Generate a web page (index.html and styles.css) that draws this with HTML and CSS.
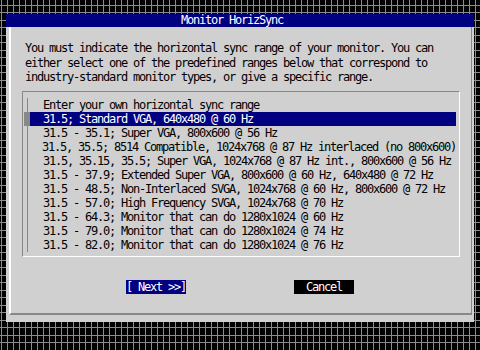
FILE: index.html
```html
<!DOCTYPE html>
<html lang="en">
<head>
    <meta charset="UTF-8">
    <title>Monitor HorizSync</title>
    <link rel="stylesheet" href="styles.css">
</head>
<body>
    <div class="dialog">
        <div class="titlebar">Monitor HorizSync</div>
        <div class="frame">
            <p class="intro">You must indicate the horizontal sync range of your monitor. You can<br>either select one of the predefined ranges below that correspond to<br>industry-standard monitor types, or give a specific range.</p>

            <!-- list of sync ranges -->
            <div class="list">
                <div class="row"><span class="mark"></span><span class="label">Enter your own horizontal sync range</span></div>
                <div class="row selected"><span class="mark"></span><span class="label">31.5; Standard VGA, 640x480 @ 60 Hz</span></div>
                <div class="row"><span class="mark"></span><span class="label">31.5 - 35.1; Super VGA, 800x600 @ 56 Hz</span></div>
                <div class="row"><span class="mark"></span><span class="label">31.5, 35.5; 8514 Compatible, 1024x768 @ 87 Hz interlaced (no 800x600)</span></div>
                <div class="row"><span class="mark"></span><span class="label">31.5, 35.15, 35.5; Super VGA, 1024x768 @ 87 Hz int., 800x600 @ 56 Hz</span></div>
                <div class="row"><span class="mark"></span><span class="label">31.5 - 37.9; Extended Super VGA, 800x600 @ 60 Hz, 640x480 @ 72 Hz</span></div>
                <div class="row"><span class="mark"></span><span class="label">31.5 - 48.5; Non-Interlaced SVGA, 1024x768 @ 60 Hz, 800x600 @ 72 Hz</span></div>
                <div class="row"><span class="mark"></span><span class="label">31.5 - 57.0; High Frequency SVGA, 1024x768 @ 70 Hz</span></div>
                <div class="row"><span class="mark"></span><span class="label">31.5 - 64.3; Monitor that can do 1280x1024 @ 60 Hz</span></div>
                <div class="row"><span class="mark"></span><span class="label">31.5 - 79.0; Monitor that can do 1280x1024 @ 74 Hz</span></div>
                <div class="row"><span class="mark"></span><span class="label">31.5 - 82.0; Monitor that can do 1280x1024 @ 76 Hz</span></div>
            </div>

            <div class="buttons">
                <div class="btn btn-next">[ Next &gt;&gt;]</div>
                <div class="btn btn-cancel">Cancel</div>
            </div>
        </div>
    </div>
</body>
</html>
```

FILE: styles.css
```css
body {
    margin: 0;
    padding: 14px 0 0 6px;
    width: 480px;
    height: 350px;
    box-sizing: border-box;
    overflow: hidden;
    background-color: #000;
    background-image:
        linear-gradient(to right, #8c8c8c 1px, transparent 1px),
        linear-gradient(to bottom, #8c8c8c 1px, transparent 1px 7px, #8c8c8c 7px 8px, transparent 8px);
    background-size: 6px 100%, 100% 15px;
    background-position: 1px 0, 0 5px;
    font-family: "DejaVu Sans Mono", monospace;
    font-size: 12px;
    letter-spacing: -1.225px;
}
.dialog {
    width: 468px;
    height: 308px;
    background: #d0d0d0;
    display: flex;
    flex-direction: column;
}
.titlebar {
    height: 13px;
    line-height: 13px;
    background: #000080;
    color: #fff;
    padding-left: 175px;
    white-space: pre;
}
.frame {
    flex: 1;
    margin: 0 2px 7px 3px;
    border-left: 2px solid #fff;
    border-right: 1px solid #888;
    border-bottom: 2px solid #888;
}
.intro {
    margin: 14px 0 0 14px;
    line-height: 14.5px;
    white-space: nowrap;
}
.list {
    margin: 6.5px 0 0 11px;
    width: 438px;
    height: 166px;
    box-sizing: border-box;
    border: 1px solid;
    border-color: #888 #fff #fff #888;
    padding: 6px 3px 0 1px;
}
.row {
    display: flex;
    height: 14px;
    line-height: 14px;
}
.mark {
    width: 6px;
    background: linear-gradient(to right, transparent 3px, #888 3px 4px, transparent 4px);
}
.row.selected .mark {
    background: #888;
}
.label {
    flex: 1;
    padding-left: 13px;
    white-space: nowrap;
}
.row.selected .label {
    background: #000080;
    color: #fff;
}
.buttons {
    display: flex;
    gap: 108px;
    margin: 23px 0 0 115px;
}
.btn {
    width: 60px;
    height: 14px;
    line-height: 14px;
    color: #fff;
    text-align: center;
    white-space: pre;
}
.btn-next {
    background: #000080;
    text-align: left;
}
.btn-cancel {
    background: #000;
}
```
